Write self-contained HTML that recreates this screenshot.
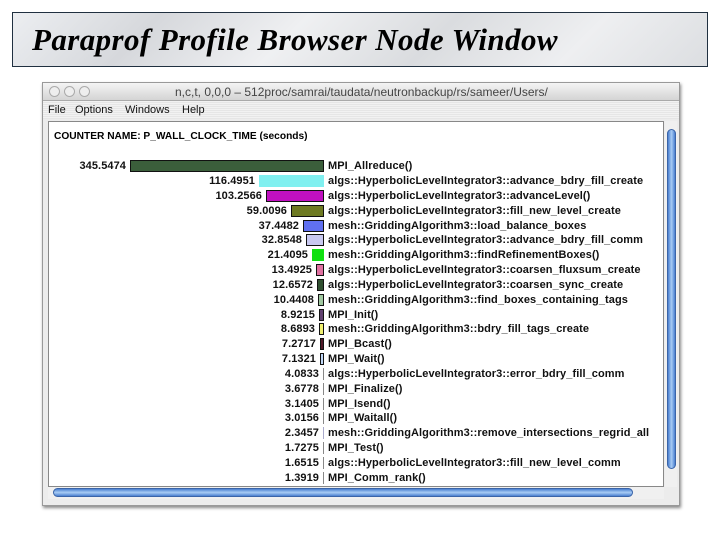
<!DOCTYPE html>
<html><head><meta charset="utf-8"><style>
*{margin:0;padding:0;box-sizing:border-box}
body{width:720px;height:540px;background:#fff;position:relative;overflow:hidden;font-family:"Liberation Sans",sans-serif}
#title{position:absolute;left:12px;top:12px;width:696px;height:55px;border:1px solid #203040;
background:linear-gradient(135deg,#eceef1 0%,#d6d8dc 20%,#eff0f2 40%,#dadcdf 60%,#eeeff1 80%,#dcdee1 100%)}
#title span{position:absolute;left:19px;top:9px;font-family:"Liberation Serif",serif;font-style:italic;font-weight:bold;font-size:31px;color:#000;letter-spacing:0.4px;white-space:nowrap}
#win{position:absolute;left:42px;top:82px;width:638px;height:424px;background:#ececec;border:1px solid #999;box-shadow:1px 2px 3px #888}
#tb{position:absolute;left:0;top:0;width:100%;height:18px;background:linear-gradient(#f4f4f4,#d4d4d4);border-bottom:1px solid #aaa}
.lt{position:absolute;top:3px;width:11px;height:11px;border-radius:50%;border:1px solid #aaa;background:#eee}
#tb .t{position:absolute;left:132px;top:2px;font-size:12px;color:#444;white-space:nowrap}
#mb{position:absolute;left:0;top:18px;width:100%;height:18px;background:repeating-linear-gradient(#f2f2f2 0 1px,#e6e6e6 1px 2px)}
#mb span{position:absolute;top:3px;font-size:11px;color:#111}
#pan{position:absolute;left:5px;top:38px;width:616px;height:366px;background:#fff;border:1px solid #888}
#hd{position:absolute;left:5px;top:9px;font-size:10.2px;font-weight:bold}
.r{position:absolute;left:0;width:616px;height:14px;font-size:11px;font-weight:bold;color:#111;letter-spacing:0.08px}
.v{position:absolute;top:0;text-align:right}
.b{position:absolute;right:341px;top:0;height:12px;border:1px solid #111}
.l{position:absolute;left:279px;top:0;white-space:nowrap}
#vs{position:absolute;left:622px;top:38px;width:12px;height:366px;background:#f0f0f0}
#vt{position:absolute;left:2px;top:8px;width:9px;height:340px;border-radius:5px;background:linear-gradient(90deg,#4a7fd0,#a8ccf4,#4a7fd0);border:1px solid #3a64a8}
#hs{position:absolute;left:5px;top:404px;width:616px;height:12px;background:#f0f0f0}
#ht{position:absolute;left:5px;top:1px;width:580px;height:9px;border-radius:5px;background:linear-gradient(#4a7fd0,#a8ccf4,#4a7fd0);border:1px solid #3a64a8}
</style></head><body>
<div id="title"><span>Paraprof Profile Browser Node Window</span></div>
<div id="win">
<div id="tb"><div class="lt" style="left:6px"></div><div class="lt" style="left:21px"></div><div class="lt" style="left:36px"></div><span class="t">n,c,t, 0,0,0 – 512proc/samrai/taudata/neutronbackup/rs/sameer/Users/</span></div>
<div id="mb"><span style="left:5px">File</span><span style="left:32px">Options</span><span style="left:82px">Windows</span><span style="left:139px">Help</span></div>
<div id="pan">
<div id="hd">COUNTER NAME: P_WALL_CLOCK_TIME (seconds)</div>
<div class="r" style="top:38px"><span class="v" style="right:539px">345.5474</span><span class="b" style="width:194px;background:#3b5e3b"></span><span class="l">MPI_Allreduce()</span></div>
<div class="r" style="top:53px"><span class="v" style="right:410px">116.4951</span><span class="b" style="width:65px;background:#80f0f0;border-color:#80f0f0"></span><span class="l">algs::HyperbolicLevelIntegrator3::advance_bdry_fill_create</span></div>
<div class="r" style="top:68px"><span class="v" style="right:403px">103.2566</span><span class="b" style="width:58px;background:#c010c0"></span><span class="l">algs::HyperbolicLevelIntegrator3::advanceLevel()</span></div>
<div class="r" style="top:83px"><span class="v" style="right:378px">59.0096</span><span class="b" style="width:33px;background:#6e7a22"></span><span class="l">algs::HyperbolicLevelIntegrator3::fill_new_level_create</span></div>
<div class="r" style="top:98px"><span class="v" style="right:366px">37.4482</span><span class="b" style="width:21px;background:#6070f0"></span><span class="l">mesh::GriddingAlgorithm3::load_balance_boxes</span></div>
<div class="r" style="top:112px"><span class="v" style="right:363px">32.8548</span><span class="b" style="width:18px;background:#c8c8f0"></span><span class="l">algs::HyperbolicLevelIntegrator3::advance_bdry_fill_comm</span></div>
<div class="r" style="top:127px"><span class="v" style="right:357px">21.4095</span><span class="b" style="width:12px;background:#10e010;border-color:#10e010"></span><span class="l">mesh::GriddingAlgorithm3::findRefinementBoxes()</span></div>
<div class="r" style="top:142px"><span class="v" style="right:353px">13.4925</span><span class="b" style="width:8px;background:#e070a0"></span><span class="l">algs::HyperbolicLevelIntegrator3::coarsen_fluxsum_create</span></div>
<div class="r" style="top:157px"><span class="v" style="right:352px">12.6572</span><span class="b" style="width:7px;background:#305030"></span><span class="l">algs::HyperbolicLevelIntegrator3::coarsen_sync_create</span></div>
<div class="r" style="top:172px"><span class="v" style="right:351px">10.4408</span><span class="b" style="width:6px;background:#a0c8a0"></span><span class="l">mesh::GriddingAlgorithm3::find_boxes_containing_tags</span></div>
<div class="r" style="top:187px"><span class="v" style="right:350px">8.9215</span><span class="b" style="width:5px;background:#604070"></span><span class="l">MPI_Init()</span></div>
<div class="r" style="top:201px"><span class="v" style="right:350px">8.6893</span><span class="b" style="width:5px;background:#f0f070"></span><span class="l">mesh::GriddingAlgorithm3::bdry_fill_tags_create</span></div>
<div class="r" style="top:216px"><span class="v" style="right:349px">7.2717</span><span class="b" style="width:4px;background:#501828"></span><span class="l">MPI_Bcast()</span></div>
<div class="r" style="top:231px"><span class="v" style="right:349px">7.1321</span><span class="b" style="width:4px;background:#c0d8f8"></span><span class="l">MPI_Wait()</span></div>
<div class="r" style="top:246px"><span class="v" style="right:346px">4.0833</span><span class="b" style="width:1px;background:#888;border:0"></span><span class="l">algs::HyperbolicLevelIntegrator3::error_bdry_fill_comm</span></div>
<div class="r" style="top:261px"><span class="v" style="right:346px">3.6778</span><span class="b" style="width:1px;background:#888;border:0"></span><span class="l">MPI_Finalize()</span></div>
<div class="r" style="top:276px"><span class="v" style="right:346px">3.1405</span><span class="b" style="width:1px;background:#888;border:0"></span><span class="l">MPI_Isend()</span></div>
<div class="r" style="top:290px"><span class="v" style="right:346px">3.0156</span><span class="b" style="width:1px;background:#888;border:0"></span><span class="l">MPI_Waitall()</span></div>
<div class="r" style="top:305px"><span class="v" style="right:346px">2.3457</span><span class="b" style="width:1px;background:#aac;border:0"></span><span class="l">mesh::GriddingAlgorithm3::remove_intersections_regrid_all</span></div>
<div class="r" style="top:320px"><span class="v" style="right:346px">1.7275</span><span class="b" style="width:1px;background:#888;border:0"></span><span class="l">MPI_Test()</span></div>
<div class="r" style="top:335px"><span class="v" style="right:346px">1.6515</span><span class="b" style="width:1px;background:#888;border:0"></span><span class="l">algs::HyperbolicLevelIntegrator3::fill_new_level_comm</span></div>
<div class="r" style="top:350px"><span class="v" style="right:346px">1.3919</span><span class="b" style="width:1px;background:#888;border:0"></span><span class="l">MPI_Comm_rank()</span></div>
</div>
<div id="vs"><div id="vt"></div></div>
<div id="hs"><div id="ht"></div></div>
</div>
</body></html>
